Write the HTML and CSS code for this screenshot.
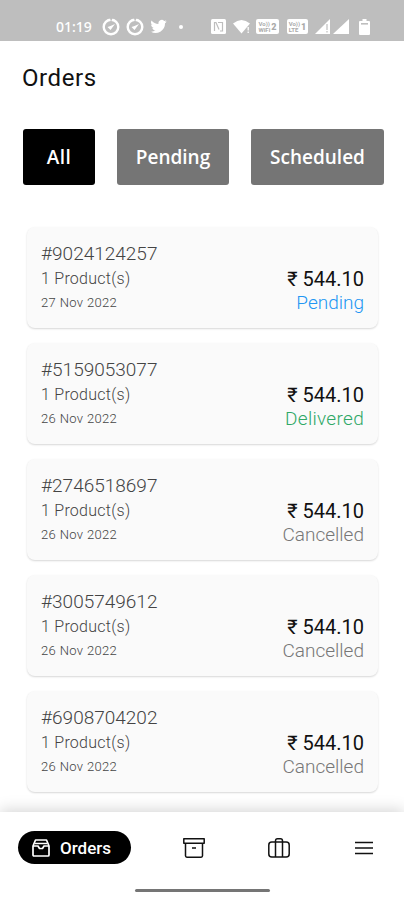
FILE: index.html
```html
<!DOCTYPE html>
<html lang="en">
<head>
  <meta charset="UTF-8" />
  <meta name="viewport" content="width=device-width, initial-scale=1.0"/>
  <title>Orders</title>
  <link rel="stylesheet" href="styles.css">
</head>
<body>
  <div class="statusbar">
    <span class="clock">01:19</span>
    <svg class="st-ring" width="18" height="18" viewBox="0 0 18 18"><circle cx="9" cy="9" r="7.3" fill="none" stroke="#fff" stroke-width="2.4"/><path d="M8 0l1 4 1.500-4z" fill="#bebebe"/><path d="M5.500 9l3 3L13 6 8.500 8z" fill="#fff"/></svg>
    <svg class="st-ring" width="18" height="18" viewBox="0 0 18 18"><circle cx="9" cy="9" r="7.3" fill="none" stroke="#fff" stroke-width="2.4"/><path d="M8 0l1 4 1.500-4z" fill="#bebebe"/><path d="M5.500 9l3 3L13 6 8.500 8z" fill="#fff"/></svg>
    <svg class="st-bird" width="17" height="17" viewBox="0 0 24 24"><path fill="#fff" d="M23.6 4.900c-.8.4-1.700.6-2.700.8 1-.6 1.700-1.500 2.100-2.600-.9.5-1.900.9-3 1.100A4.700 4.700 0 0 0 12 8.500C8 8.300 4.600 6.400 2.200 3.500a4.700 4.700 0 0 0 1.500 6.300c-.8 0-1.500-.2-2.100-.6 0 2.300 1.600 4.200 3.800 4.700-.7.2-1.400.2-2.100.1.6 1.900 2.300 3.200 4.400 3.300A9.500 9.500 0 0 1 .8 19.200 13.400 13.400 0 0 0 21.200 7.300c.9-.6 1.700-1.500 2.400-2.400z"/></svg>
    <span class="dot"></span>
    <svg class="st-nfc" width="15" height="15" viewBox="0 0 15 15"><rect width="15" height="15" rx="1.5" fill="#fff"/><path d="M3.500 12V3.500H5l3 7M7 3.500h4.500V12H9" fill="none" stroke="#bebebe" stroke-width="1.200"/></svg>
    <svg class="st-wifi" width="18" height="15" viewBox="0 0 18 15"><path d="M0 4.500Q8.500-2.500 17 4.500L8.500 14.500z" fill="#fff"/><path d="M15.200 8v3.500M15.200 12.500V14" stroke="#fff" stroke-width="1.300"/></svg>
    <span class="volte volte-a"><span>Vo))<br>WiFi</span><b>2</b></span>
    <span class="volte volte-b"><span>Vo))<br>LTE</span><b>1</b></span>
    <svg class="st-signal" width="15" height="15" viewBox="0 0 15 15"><path d="M0 15L15 0v15z" fill="#fff"/><path d="M12 5v6M12 12v1.500" stroke="#bebebe" stroke-width="1.200"/></svg>
    <svg class="st-signal" width="16" height="15" viewBox="0 0 16 15"><path d="M0 15L16 0v15z" fill="#fff"/></svg>
    <svg class="st-battery" width="11" height="16" viewBox="0 0 11 16"><path d="M3.500 0h4v2H10q1 0 1 1v12q0 1-1 1H1q-1 0-1-1V3q0-1 1-1h2.500z" fill="#fff"/><path d="M2 4.800h7" stroke="#bebebe" stroke-width="1.600"/></svg>
  </div>

  <div class="page">
    <h1>Orders</h1>

    <div class="tabs">
      <button class="tab tab-all active">All</button>
      <button class="tab tab-pending">Pending</button>
      <button class="tab tab-scheduled">Scheduled</button>
    </div>

    <div class="orders">
      <div class="card">
        <div class="info">
          <div class="number">#9024124257</div>
          <div class="products">1 Product(s)</div>
          <div class="date">27 Nov 2022</div>
        </div>
        <div class="summary">
          <div class="price">₹ 544.10</div>
          <div class="state pending">Pending</div>
        </div>
      </div>

      <div class="card">
        <div class="info">
          <div class="number">#5159053077</div>
          <div class="products">1 Product(s)</div>
          <div class="date">26 Nov 2022</div>
        </div>
        <div class="summary">
          <div class="price">₹ 544.10</div>
          <div class="state delivered">Delivered</div>
        </div>
      </div>

      <div class="card">
        <div class="info">
          <div class="number">#2746518697</div>
          <div class="products">1 Product(s)</div>
          <div class="date">26 Nov 2022</div>
        </div>
        <div class="summary">
          <div class="price">₹ 544.10</div>
          <div class="state cancelled">Cancelled</div>
        </div>
      </div>

      <div class="card">
        <div class="info">
          <div class="number">#3005749612</div>
          <div class="products">1 Product(s)</div>
          <div class="date">26 Nov 2022</div>
        </div>
        <div class="summary">
          <div class="price">₹ 544.10</div>
          <div class="state cancelled">Cancelled</div>
        </div>
      </div>

      <div class="card">
        <div class="info">
          <div class="number">#6908704202</div>
          <div class="products">1 Product(s)</div>
          <div class="date">26 Nov 2022</div>
        </div>
        <div class="summary">
          <div class="price">₹ 544.10</div>
          <div class="state cancelled">Cancelled</div>
        </div>
      </div>
    </div>
  </div>

  <nav class="navbar">
    <div class="nav-items">
      <a class="nav-active">
        <svg width="18" height="18" viewBox="0 0 18 18" fill="none" stroke="#fff" stroke-width="1.700" stroke-linejoin="round"><path d="M1 7L3.500 1h11L17 7v9q0 1-1 1H2q-1 0-1-1z"/><path d="M1 7h5l1.500 2.500h3L12 7h5M3 4.500h12"/></svg>
        <span>Orders</span>
      </a>
      <svg class="nav-archive" width="22" height="20" viewBox="0 0 22 20" fill="none" stroke="#111" stroke-width="1.500" stroke-linejoin="round"><rect x=".8" y=".8" width="20.400" height="4.500"/><path d="M2.500 5.300v12.500q0 1.400 1.400 1.400h14.200q1.400 0 1.400-1.400V5.300M9 10h4"/></svg>
      <svg class="nav-bag" width="22" height="20" viewBox="0 0 22 20" fill="none" stroke="#111" stroke-width="1.500"><rect x=".8" y="4" width="20.400" height="15" rx="3"/><path d="M7.500 19V3q0-2.200 2-2.200h3q2 0 2 2.200v16"/></svg>
      <svg class="nav-menu" width="18" height="14" viewBox="0 0 18 14" stroke="#111" stroke-width="1.700"><path d="M0 1.500h18M0 7h18M0 12.500h18"/></svg>
    </div>
    <div class="home-line"></div>
  </nav>
</body>
</html>
```

FILE: styles.css
```css
* {
  box-sizing: border-box;
}

body {
  margin: 0;
  height: 900px;
  overflow: hidden;
  display: flex;
  flex-direction: column;
  background-color: #fff;
  color: #111;
  font-family: Roboto, "Noto Sans", sans-serif;
}

.statusbar {
  height: 41px;
  flex-shrink: 0;
  background-color: #bebebe;
  color: #fff;
  display: flex;
  align-items: center;
  padding: 12px 0 0 56px;
}

.statusbar svg {
  flex-shrink: 0;
}

.clock {
  width: 46px;
  font-family: "Noto Sans", sans-serif;
  font-size: 14px;
  font-weight: 500;
}

.st-ring {
  margin-right: 6px;
}

.dot {
  width: 4px;
  height: 4px;
  margin: 0 28px 0 12px;
  border-radius: 50%;
  background-color: #fff;
}

.st-wifi {
  margin: 0 5px 0 7px;
}

.volte {
  height: 15px;
  width: 23px;
  display: flex;
  align-items: center;
  justify-content: center;
  gap: 1px;
  border-radius: 2px;
  background-color: #fff;
  color: #aaa;
  font-size: 6px;
  line-height: 6px;
  font-weight: bold;
}

.volte b {
  font-size: 9px;
}

.volte-b {
  width: 21px;
  margin: 0 7px 0 8px;
}

.st-signal {
  margin-right: 3px;
}

.st-battery {
  margin-left: 7px;
}

.page {
  flex: 1;
  min-height: 0;
  overflow: hidden;
}

h1 {
  margin: 22px 0 0 22px;
  font-size: 24px;
  line-height: 30px;
  font-weight: 400;
  letter-spacing: 0.6px;
}

.tabs {
  display: flex;
  gap: 22px;
  margin: 36px 0 0 23px;
}

.tab {
  height: 56px;
  padding: 0;
  border: none;
  border-radius: 3px;
  background-color: #757575;
  color: #fff;
  font-family: "Open Sans", sans-serif;
  font-size: 19px;
  font-weight: 600;
}

.tab-all {
  width: 72px;
  letter-spacing: 0.5px;
}

.tab-pending {
  width: 112px;
}

.tab-scheduled {
  width: 133px;
}

.active {
  background-color: #000;
}

.orders {
  display: flex;
  flex-direction: column;
  gap: 15px;
  margin: 42px 26px 0 27px;
}

.card {
  height: 101px;
  display: flex;
  justify-content: space-between;
  padding: 14px 14px 0;
  border-radius: 8px;
  background-color: #fafafa;
  box-shadow: 0 1px 2px rgba(0, 0, 0, 0.16);
}

.info {
  font-weight: 300;
  color: #444;
}

.number {
  font-size: 19px;
  line-height: 25px;
}

.products {
  font-size: 16px;
  line-height: 25px;
  letter-spacing: 0.25px;
}

.date {
  font-size: 13px;
  line-height: 23px;
  letter-spacing: 0.35px;
}

.summary {
  padding-top: 26px;
  text-align: right;
}

.price {
  font-size: 20px;
  line-height: 25px;
}

.state {
  font-size: 19px;
  line-height: 22px;
  font-weight: 300;
}

.pending {
  color: #2196f3;
}

.delivered {
  color: #2fa866;
  letter-spacing: 0.3px;
}

.cancelled {
  color: #777;
}

.navbar {
  position: relative;
  height: 88px;
  flex-shrink: 0;
  background-color: #fff;
  box-shadow: 0 -2px 14px rgba(0, 0, 0, 0.17);
}

.nav-items {
  display: flex;
  align-items: center;
  padding: 19px 0 0 18px;
}

.nav-active {
  width: 113px;
  height: 33px;
  display: flex;
  align-items: center;
  gap: 10px;
  padding-left: 14px;
  border-radius: 17px;
  background-color: #000;
  color: #fff;
  font-size: 17px;
  font-weight: 500;
}

.nav-archive {
  margin-left: 52px;
}

.nav-bag {
  margin-left: 63px;
}

.nav-menu {
  margin-left: 65px;
}

.home-line {
  width: 135px;
  height: 3px;
  margin: 25px auto 0;
  border-radius: 2px;
  background-color: #757575;
}
```
